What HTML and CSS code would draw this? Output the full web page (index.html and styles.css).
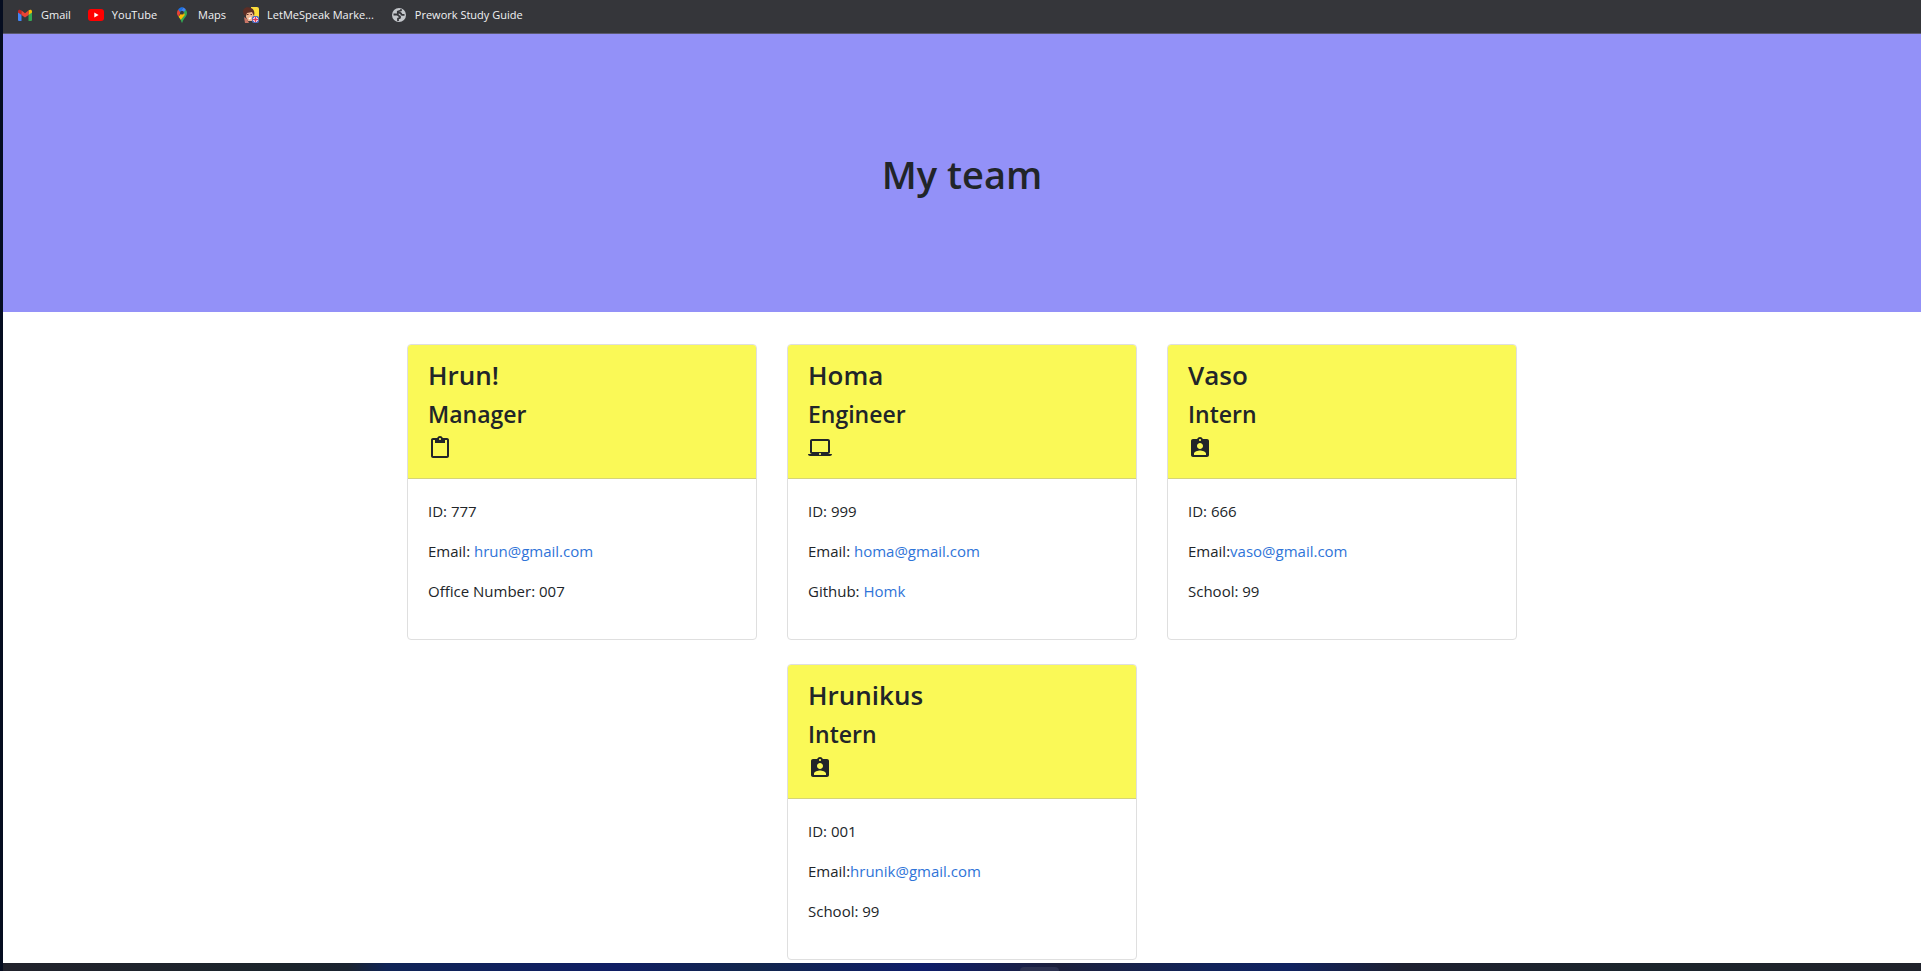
FILE: index.html
```
<!DOCTYPE html>
<html lang="en">
<head>
<meta charset="utf-8">
<meta name="viewport" content="width=device-width, initial-scale=1">
<title>My team</title>
<link rel="stylesheet" href="styles.css">
</head>
<body>
<svg class="sprite" aria-hidden="true">
  <symbol id="clipboard" viewBox="0 0 24 24"><path d="M19 2h-4.200C14.400.8 13.300 0 12 0S9.600.8 9.200 2H5c-1.100 0-2 .9-2 2v16c0 1.100.9 2 2 2h14c1.100 0 2-.9 2-2V4c0-1.100-.9-2-2-2zm-7 0c.55 0 1 .45 1 1s-.45 1-1 1-1-.45-1-1 .45-1 1-1zm7 18H5V4h2v3h10V4h2v16z"/></symbol>
  <symbol id="laptop" viewBox="0 0 24 24"><path d="M20 18c1.100 0 2-.9 2-2V5c0-1.100-.9-2-2-2H4c-1.100 0-2 .9-2 2v11c0 1.100.9 2 2 2H0c0 1.100.9 2 2 2h20c1.100 0 2-.9 2-2h-4zM4 5h16v11H4V5zm8 14c-.55 0-1-.45-1-1s.45-1 1-1 1 .45 1 1-.45 1-1 1z"/></symbol>
  <symbol id="badge" viewBox="0 0 24 24"><path d="M19 3h-4.180C14.400 1.840 13.300 1 12 1c-1.300 0-2.400.84-2.820 2H5c-1.100 0-2 .9-2 2v14c0 1.100.9 2 2 2h14c1.100 0 2-.9 2-2V5c0-1.100-.9-2-2-2zm-7 0c.55 0 1 .45 1 1s-.45 1-1 1-1-.45-1-1 .45-1 1-1zm0 4c1.660 0 3 1.340 3 3s-1.340 3-3 3-3-1.340-3-3 1.340-3 3-3zm6 12H6v-1.400c0-2 4-3.100 6-3.100s6 1.100 6 3.100V19z"/></symbol>
</svg>
<nav class="bookmarks" aria-label="Bookmarks">
  <a class="bookmark" href="#gmail">
    <svg viewBox="0 0 16 16" aria-hidden="true"><path fill="#4285f4" d="M1 4l3.500 2.500V14H2a1 1 0 0 1-1-1z"/><path fill="#34a853" d="M15 4l-3.500 2.500V14H14a1 1 0 0 0 1-1z"/><path fill="#c5221f" d="M1 4.500C1 2.500 3 2.200 4.500 3.500V8L1 5.500z"/><path fill="#fbbc04" d="M15 4.500c0-2-2-2.300-3.500-1V8L15 5.500z"/><path fill="#ea4335" d="M4.500 3.500L8 6.200l3.500-2.700V8L8 10.600 4.500 8z"/></svg>
    <span>Gmail</span>
  </a>
  <a class="bookmark" href="#youtube">
    <svg viewBox="0 0 16 16" aria-hidden="true"><rect y="2" width="16" height="12" rx="3" fill="#f00"/><path fill="#fff" d="M6.300 5.500v5L10.600 8z"/></svg>
    <span>YouTube</span>
  </a>
  <a class="bookmark" href="#maps">
    <svg viewBox="0 0 16 16" aria-hidden="true"><path fill="#34a853" d="M13 6c0 4-4 5.500-4.500 9.500h-1C7.200 13 5.800 11.600 4.500 9.800L11.800 2.800C12.600 3.700 13 4.800 13 6z"/><path fill="#fbbc04" d="M4.500 9.800L9.300 4l1.500 4-4 4.800C6.200 11.800 5.300 11 4.500 9.800z"/><path fill="#ea4335" d="M4.200 2.400L7 5 4.500 9.600C3.400 8.200 3 7.300 3 6c0-1.400.4-2.600 1.200-3.600z"/><path fill="#1a73e8" d="M4.200 2.400C5.700.4 8 0 9.500.5L6 5z"/><path fill="#4285f4" d="M9.500.5c1 .4 1.800 1.300 2.400 2.300L8 7 6 5z"/><circle cx="8" cy="5.700" r="1.900" fill="#35363a"/></svg>
    <span>Maps</span>
  </a>
  <a class="bookmark" href="#letmespeak">
    <svg viewBox="0 0 16 16" aria-hidden="true"><path fill="#fddd3b" d="M8 0h6a2 2 0 0 1 2 2v10H8z"/><path fill="#f0b795" d="M3 5h7l1 5-2 4H5l-2-4z"/><path fill="#5d2d24" d="M0 5C0 1 4-1 8 1c3 1 4 4 3 8L9 5 4 6 3 9 1 8z"/><path stroke="#5d2d24" d="M4 7.500h1.500M7.500 7.500H9"/><path fill="#fff" d="M5.500 11l3-1-1 2-1.500.5z"/><path fill="#c87566" d="M1 10l3 2 2 4H2z"/><rect x="9" y="9" width="7" height="7" rx="2" fill="#526fc5"/><path stroke="#fff" stroke-width="3" d="M12.500 10v5M10 12.500h5"/><path stroke="#e83755" stroke-width="1.500" d="M12.500 10v5M10 12.500h5"/></svg>
    <span>LetMeSpeak Marke...</span>
  </a>
  <a class="bookmark" href="#prework">
    <svg viewBox="0 0 16 16" aria-hidden="true"><circle cx="8" cy="8" r="7" fill="#c4c7cb"/><path fill="none" stroke="#35363a" stroke-width="1.800" stroke-linejoin="round" d="M2.500 7.500H6c1.500 0 1.500 2 3 2v1.300L7 11.500V14M10 2.200v1.300L6.800 4.500v1.300H9c1.200 0 1 2 2.300 2h2.200"/></svg>
    <span>Prework Study Guide</span>
  </a>
</nav>
<div class="page">
  <header class="hero"><h1>My team</h1></header>
  <main class="team">
    <article class="card">
      <header class="card-head"><h2>Hrun!</h2><h3>Manager</h3><svg class="icon" aria-hidden="true"><use href="#clipboard"/></svg></header>
      <div class="card-body"><p>ID: 777</p><p>Email: <a href="mailto:hrun@gmail.com">hrun@gmail.com</a></p><p>Office Number: 007</p></div>
    </article>
    <article class="card">
      <header class="card-head"><h2>Homa</h2><h3>Engineer</h3><svg class="icon" aria-hidden="true"><use href="#laptop"/></svg></header>
      <div class="card-body"><p>ID: 999</p><p>Email: <a href="mailto:homa@gmail.com">homa@gmail.com</a></p><p>Github: <a href="#homk">Homk</a></p></div>
    </article>
    <article class="card">
      <header class="card-head"><h2>Vaso</h2><h3>Intern</h3><svg class="icon" aria-hidden="true"><use href="#badge"/></svg></header>
      <div class="card-body"><p>ID: 666</p><p>Email:<a href="mailto:vaso@gmail.com">vaso@gmail.com</a></p><p>School: 99</p></div>
    </article>
    <article class="card">
      <header class="card-head"><h2>Hrunikus</h2><h3>Intern</h3><svg class="icon" aria-hidden="true"><use href="#badge"/></svg></header>
      <div class="card-body"><p>ID: 001</p><p>Email:<a href="mailto:hrunik@gmail.com">hrunik@gmail.com</a></p><p>School: 99</p></div>
    </article>
  </main>
</div>
<div class="taskbar"><div class="taskbar-tab"></div></div>
</body>
</html>
```
FILE: styles.css
```
* { box-sizing: border-box; }

body {
  margin: 0;
  min-height: 100vh;
  display: flex;
  flex-direction: column;
  border-left: 3px solid #050d20;
  background: #fff;
  color: #212529;
  font: 15px/24px "Open Sans", "Noto Sans", sans-serif;
}

h1, h2, h3, p { margin: 0; }
h1, h2, h3 { font-weight: 600; }
a { color: #2f74d8; text-decoration: none; }

.sprite { position: absolute; width: 0; height: 0; }

.bookmarks {
  display: flex;
  gap: 17px;
  padding: 4px 14px;
  background: #35363a;
  border-bottom: 1px solid #5b5a70;
}
.bookmark {
  display: flex;
  align-items: center;
  gap: 8px;
  height: 25px;
  padding-bottom: 3px;
  color: #f1f2f4;
  font-size: 11px;
}
.bookmark svg { width: 16px; height: 16px; }

.page { flex: 1; }

.hero {
  display: flex;
  justify-content: center;
  padding: 116px 16px 114px;
  background: #9391f8;
}
.hero h1 { font-size: 38px; line-height: 48px; }

.team {
  display: flex;
  flex-wrap: wrap;
  justify-content: center;
  gap: 24px 30px;
  max-width: 1140px;
  margin: 0 auto;
  padding: 32px 0 3px;
}

.card {
  width: 350px;
  overflow: hidden;
  border: 1px solid #dfdfdf;
  border-radius: 4px;
}
.card-head {
  display: flex;
  flex-direction: column;
  gap: 8px;
  padding: 13px 20px 18px;
  background: #faf957;
  border-bottom: 1px solid #d5d47a;
}
.card-head h2 { font-size: 26px; line-height: 34px; }
.card-head h3 { font-size: 23px; line-height: 28px; }
.icon { width: 24px; height: 24px; fill: #212529; }

.card-body {
  display: flex;
  flex-direction: column;
  gap: 16px;
  padding: 20px 20px 36px;
}

.taskbar {
  display: flex;
  height: 8px;
  padding: 4px 0 0 53%;
  background: linear-gradient(90deg, #21222c, #1b242b 15%, #1a2330 18%, #102456 20%, #101e64 32%, #12264c 39%, #0e1d6a 48%, #1c203c 55%, #11235a 63%, #102260 67%, #1d2030 73%, #1b242b 85%, #20222b);
}
.taskbar-tab {
  width: 39px;
  border-radius: 4px 4px 0 0;
  background: #2c3150;
}
```
